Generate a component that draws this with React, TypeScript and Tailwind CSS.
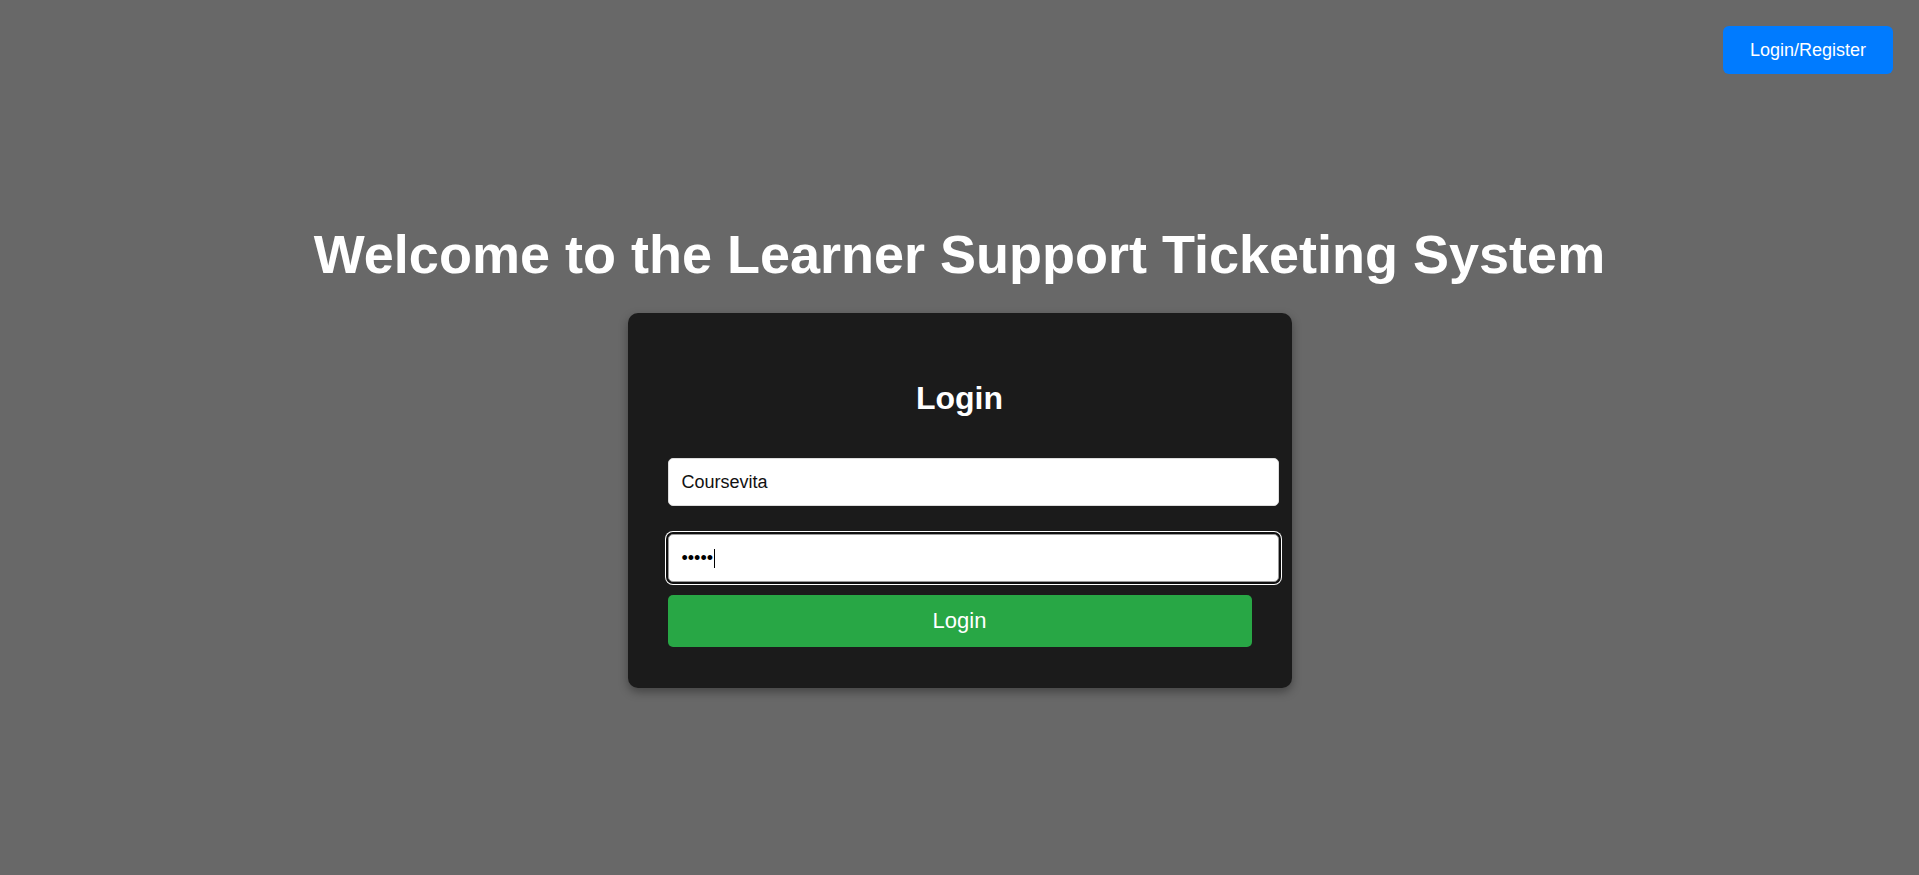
import React from "react";

export default function App() {
  return (
    <div
      className="w-full h-[875px] bg-[#686868] overflow-hidden flex flex-col"
      style={{ fontFamily: '"Liberation Sans", Arial, sans-serif' }}
    >
      <div className="flex justify-end pt-[26px] pr-[26px]">
        <button className="w-[170px] h-[48px] rounded-[6px] bg-[#007bff] text-white text-[18px] leading-none">
          Login/Register
        </button>
      </div>

      <h1 className="mt-[149px] text-center text-white font-bold text-[54px] leading-[62px]">
        Welcome to the Learner Support Ticketing System
      </h1>

      <div className="mt-[28px] mx-auto w-[664px] bg-[#1b1b1b] rounded-[10px] shadow-[0_4px_10px_rgba(0,0,0,0.35)] px-[40px] pt-[40px] pb-[41px]">
        <h2 className="mt-[27px] text-center text-white font-bold text-[32px] leading-[37px]">
          Login
        </h2>

        <div className="mt-[41px] w-[611px] h-[48px] bg-white rounded-[5px] border border-[#dddddd] px-[13px] flex items-center text-[18px] text-[#111]">
          Coursevita
        </div>

        <div className="mt-[28px] w-[611px] h-[48px] bg-white rounded-[5px] border border-[#999] px-[13px] flex items-center text-[18px] text-black shadow-[0_0_0_2px_#101010,0_0_0_3px_#ffffff]">
          <span>•••••</span>
          <span className="ml-[1px] inline-block w-[1px] h-[19px] bg-black" />
        </div>

        <button className="mt-[13px] w-[584px] h-[52px] rounded-[5px] bg-[#28a745] text-white text-[22px] leading-none">
          Login
        </button>
      </div>
    </div>
  );
}
